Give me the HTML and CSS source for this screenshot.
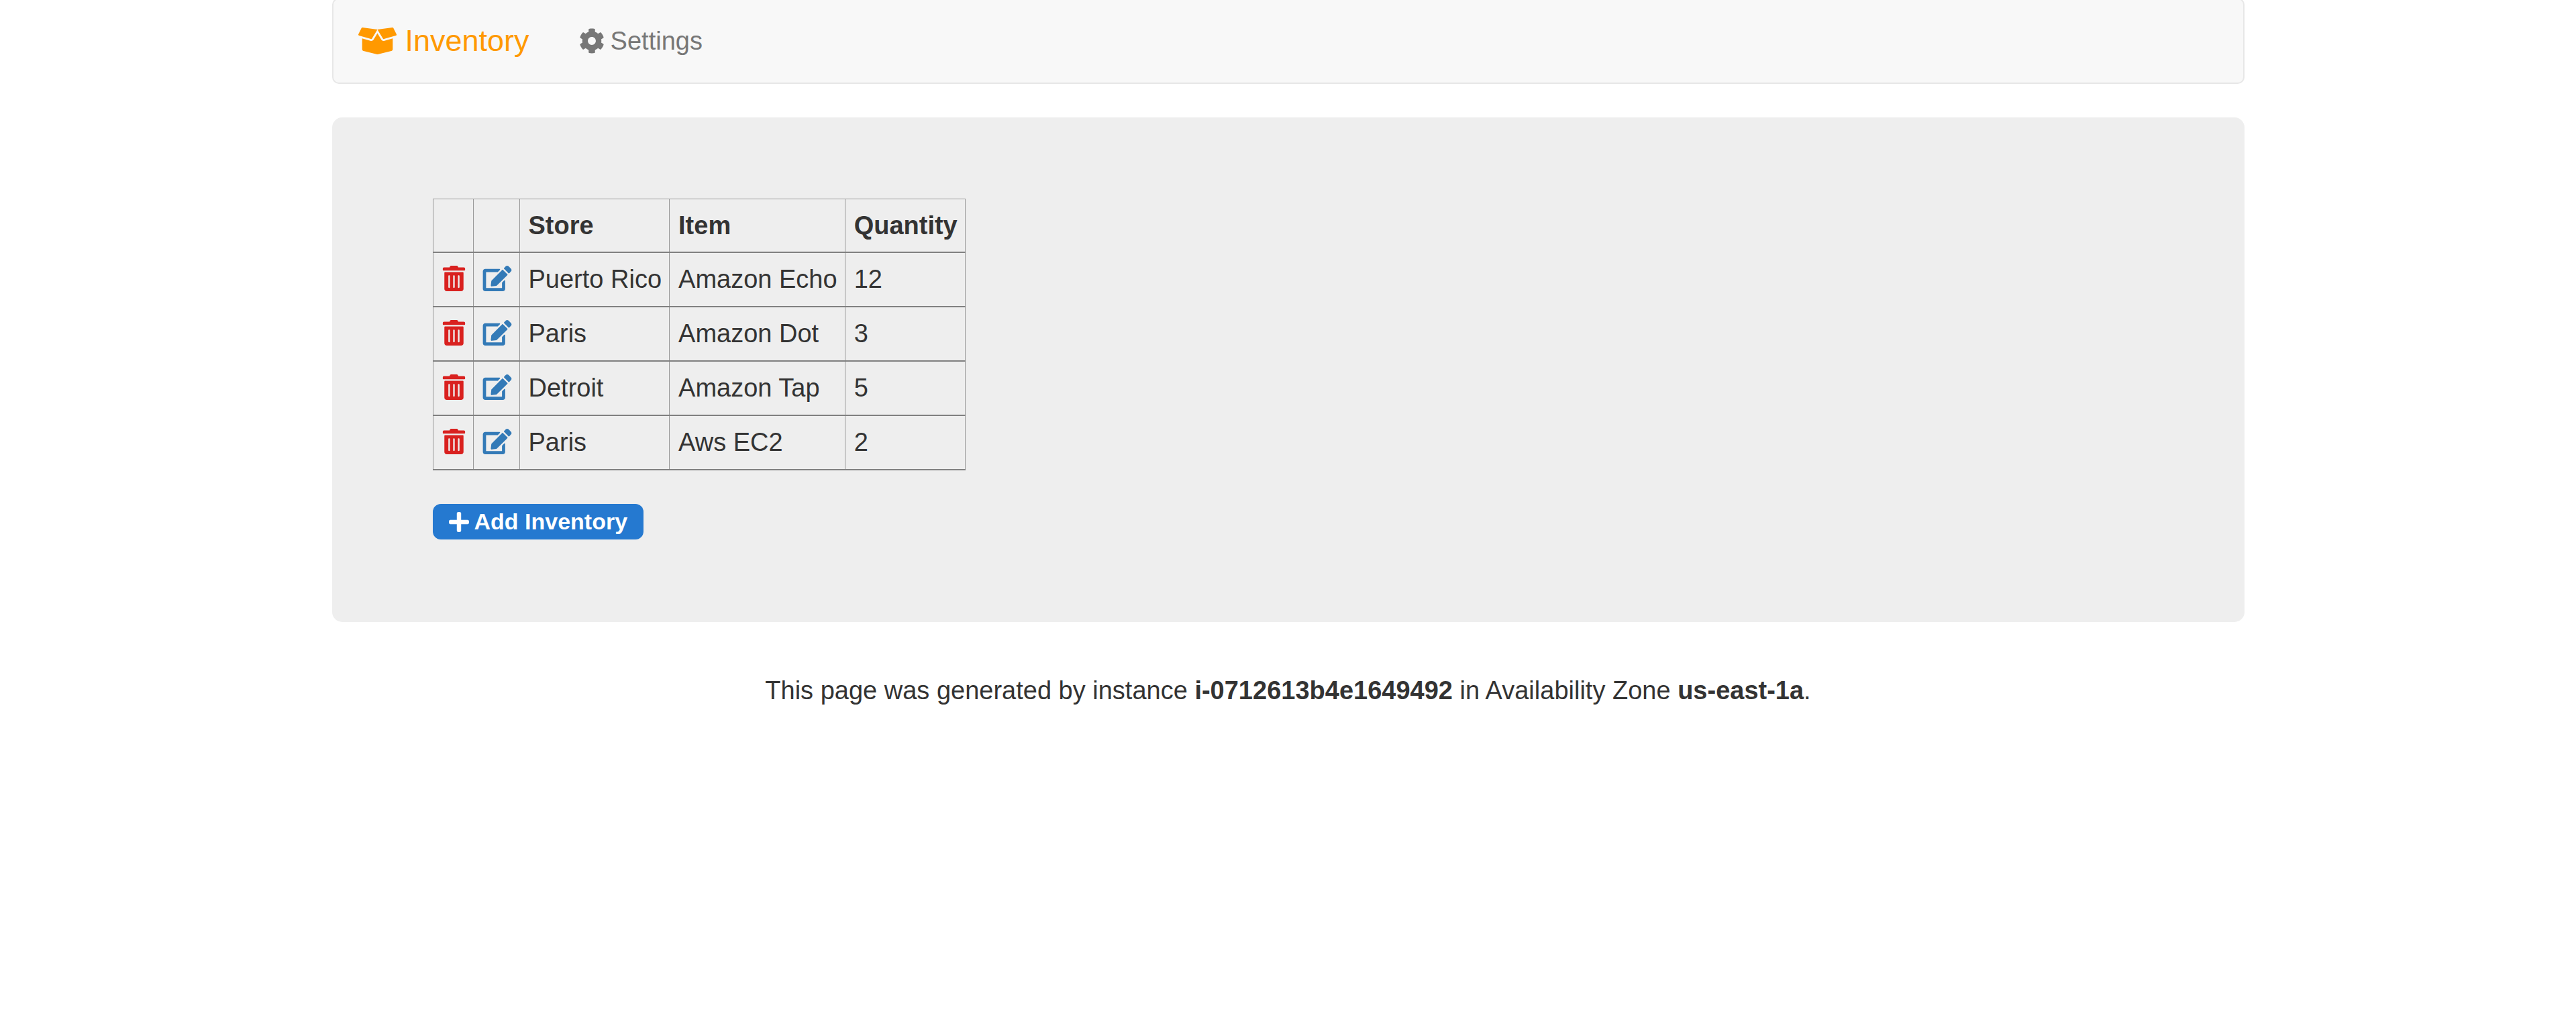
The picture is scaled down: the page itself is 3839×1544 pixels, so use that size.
FILE: index.html
```html
<!DOCTYPE html>
<html lang="en">
<head>
<meta charset="utf-8">
<meta name="viewport" content="width=device-width, initial-scale=1">
<title>Inventory</title>
<link rel="stylesheet" href="styles.css">
</head>
<body>
<svg class="sprite" aria-hidden="true">
  <symbol id="box-open" viewBox="0 0 640 512"><path d="M53.2 41L1.7 143.8c-4.6 9.2.3 20.2 10.1 23l197.9 56.5c7.1 2 14.7-1 18.5-7.3L320 64 69.8 32.1c-6.9-.8-13.5 2.7-16.6 8.9zm585.1 102.8L586.8 41c-3.1-6.2-9.8-9.8-16.7-8.9L320 64l91.7 152.1c3.8 6.3 11.4 9.3 18.5 7.3l197.9-56.5c9.9-2.9 14.7-13.9 10.2-23.1zM425.7 256c-16.9 0-32.8-9-41.4-23.4L320 126l-64.2 106.6c-8.7 14.5-24.6 23.5-41.5 23.5-4.5 0-9-.6-13.3-1.9L64 215v178c0 14.7 10 27.5 24.2 31l216.2 54.1c10.2 2.5 20.9 2.5 31 0L551.8 424c14.2-3.6 24.2-16.4 24.2-31V215l-137 39.1c-4.3 1.3-8.8 1.9-13.3 1.9z"/></symbol>
  <symbol id="cog" viewBox="0 0 512 512"><path d="M487.4 315.7l-42.6-24.6c4.3-23.2 4.3-47 0-70.2l42.6-24.6c4.9-2.8 7.1-8.6 5.5-14-11.1-35.6-30-67.8-54.7-94.6-3.8-4.1-10-5.1-14.8-2.3L380.8 110c-17.9-15.4-38.5-27.3-60.8-35.1V25.8c0-5.6-3.9-10.5-9.4-11.7-36.7-8.2-74.3-7.8-109.2 0-5.5 1.2-9.4 6.1-9.4 11.7V75c-22.2 7.9-42.8 19.8-60.8 35.1L88.7 85.5c-4.9-2.8-11-1.9-14.8 2.3-24.7 26.7-43.6 58.9-54.7 94.6-1.7 5.4.6 11.2 5.5 14L67.3 221c-4.3 23.2-4.3 47 0 70.2l-42.6 24.6c-4.9 2.8-7.1 8.6-5.5 14 11.1 35.6 30 67.8 54.7 94.6 3.8 4.1 10 5.1 14.8 2.3l42.6-24.6c17.9 15.4 38.5 27.3 60.8 35.1v49.2c0 5.6 3.9 10.5 9.4 11.7 36.7 8.2 74.3 7.8 109.2 0 5.5-1.2 9.4-6.1 9.4-11.7v-49.2c22.2-7.9 42.8-19.8 60.8-35.1l42.6 24.6c4.9 2.8 11 1.9 14.8-2.3 24.7-26.7 43.6-58.9 54.7-94.6 1.5-5.5-.7-11.3-5.6-14.1zM256 336c-44.1 0-80-35.9-80-80s35.9-80 80-80 80 35.9 80 80-35.9 80-80 80z"/></symbol>
  <symbol id="trash" viewBox="0 0 448 512"><path d="M0 84V56c0-13.3 10.7-24 24-24h112l9.4-18.7c4-8.2 12.3-13.3 21.4-13.3h114.3c9.1 0 17.4 5.1 21.5 13.3L312 32h112c13.3 0 24 10.7 24 24v28c0 6.6-5.4 12-12 12H12C5.4 96 0 90.6 0 84zm416 56v324c0 26.5-21.5 48-48 48H80c-26.5 0-48-21.5-48-48V140c0-6.6 5.4-12 12-12h360c6.6 0 12 5.4 12 12zm-272 68c0-8.8-7.2-16-16-16s-16 7.2-16 16v224c0 8.8 7.2 16 16 16s16-7.2 16-16V208zm96 0c0-8.8-7.2-16-16-16s-16 7.2-16 16v224c0 8.8 7.2 16 16 16s16-7.2 16-16V208zm96 0c0-8.8-7.2-16-16-16s-16 7.2-16 16v224c0 8.8 7.2 16 16 16s16-7.2 16-16V208z"/></symbol>
  <symbol id="edit" viewBox="0 0 576 512"><path d="M402.6 83.2l90.2 90.2c3.8 3.8 3.8 10 0 13.8L274.4 405.6l-92.8 10.3c-12.4 1.4-22.9-9.1-21.5-21.5l10.3-92.8L388.8 83.2c3.8-3.8 10-3.8 13.8 0zm162-22.9l-48.8-48.8c-15.2-15.2-39.9-15.2-55.2 0l-35.4 35.4c-3.8 3.8-3.8 10 0 13.8l90.2 90.2c3.8 3.8 10 3.8 13.8 0l35.4-35.4c15.2-15.3 15.2-40 0-55.2zM384 346.2V448H64V128h229.8c3.2 0 6.2-1.3 8.5-3.5l40-40c7.6-7.6 2.2-20.5-8.5-20.5H48C21.5 64 0 85.5 0 112v352c0 26.5 21.5 48 48 48h352c26.5 0 48-21.5 48-48V306.2c0-10.7-12.9-16-20.5-8.5l-40 40c-2.2 2.3-3.5 5.3-3.5 8.5z"/></symbol>
  <symbol id="plus" viewBox="0 32 448 448"><path d="M416 208H272V64c0-17.67-14.33-32-32-32h-32c-17.67 0-32 14.33-32 32v144H32c-17.67 0-32 14.33-32 32v32c0 17.67 14.33 32 32 32h144v144c0 17.67 14.33 32 32 32h32c17.67 0 32-14.33 32-32V304h144c17.67 0 32-14.33 32-32v-32c0-17.67-14.33-32-32-32z"/></symbol>
</svg>

<div class="container">
  <nav class="navbar">
    <a class="brand" href="#"><svg class="icon icon-brand"><use href="#box-open"/></svg>Inventory</a>
    <a class="nav-link" href="#"><svg class="icon icon-cog"><use href="#cog"/></svg>Settings</a>
  </nav>

  <main class="jumbotron">
    <table class="inventory">
      <thead>
        <tr><th></th><th></th><th scope="col">Store</th><th scope="col">Item</th><th scope="col">Quantity</th></tr>
      </thead>
      <tbody>
        <tr>
          <td><a class="delete" href="#" aria-label="Delete"><svg class="icon icon-trash"><use href="#trash"/></svg></a></td>
          <td><a class="edit" href="#" aria-label="Edit"><svg class="icon icon-edit"><use href="#edit"/></svg></a></td>
          <td>Puerto Rico</td><td>Amazon Echo</td><td>12</td>
        </tr>
        <tr>
          <td><a class="delete" href="#" aria-label="Delete"><svg class="icon icon-trash"><use href="#trash"/></svg></a></td>
          <td><a class="edit" href="#" aria-label="Edit"><svg class="icon icon-edit"><use href="#edit"/></svg></a></td>
          <td>Paris</td><td>Amazon Dot</td><td>3</td>
        </tr>
        <tr>
          <td><a class="delete" href="#" aria-label="Delete"><svg class="icon icon-trash"><use href="#trash"/></svg></a></td>
          <td><a class="edit" href="#" aria-label="Edit"><svg class="icon icon-edit"><use href="#edit"/></svg></a></td>
          <td>Detroit</td><td>Amazon Tap</td><td>5</td>
        </tr>
        <tr>
          <td><a class="delete" href="#" aria-label="Delete"><svg class="icon icon-trash"><use href="#trash"/></svg></a></td>
          <td><a class="edit" href="#" aria-label="Edit"><svg class="icon icon-edit"><use href="#edit"/></svg></a></td>
          <td>Paris</td><td>Aws EC2</td><td>2</td>
        </tr>
      </tbody>
    </table>
    <button class="add" type="button"><svg class="icon icon-plus"><use href="#plus"/></svg>Add Inventory</button>
  </main>

  <footer class="footer">This page was generated by instance <strong>i-0712613b4e1649492</strong> in Availability Zone <strong>us-east-1a</strong>.</footer>
</div>
</body>
</html>
```
FILE: styles.css
```css
* { box-sizing: border-box; }

body {
  margin: 0;
  background: #fff;
  color: #333;
  font-family: "Liberation Sans", Arial, Helvetica, sans-serif;
  font-size: 38px;
  line-height: 54px;
}

a { text-decoration: none; }

.sprite { position: absolute; width: 0; height: 0; }

.icon { flex: none; fill: currentColor; }
.icon-brand { width: 57px; height: 46px; }
.icon-cog { width: 38px; height: 38px; }
.icon-trash { width: 35px; height: 38px; vertical-align: -5px; }
.icon-edit { width: 44px; height: 38px; vertical-align: -5px; }
.icon-plus { width: 30px; height: 30px; }

.container {
  max-width: 2850px;
  margin: 0 auto;
}

/* The bar is tucked slightly under the top of the window */
.navbar {
  display: flex;
  align-items: center;
  gap: 74px;
  min-height: 128px;
  margin: -3px 0 50px;
  padding: 0 37px;
  background: #f8f8f8;
  border: 2px solid #e7e7e7;
  border-radius: 10px;
}

.brand,
.nav-link {
  display: flex;
  align-items: center;
}
.brand { gap: 13px; color: #f90; font-size: 45px; }
.nav-link { gap: 9px; color: #777; }

.jumbotron {
  padding: 121px 150px 123px;
  background: #eee;
  border-radius: 15px;
}

.inventory {
  margin-bottom: 50px;
  border-collapse: collapse;
}
.inventory th,
.inventory td {
  padding: 12px 11px 12px 13px;
  border: 1px solid #999;
  border-bottom: 2px solid #808080;
  text-align: left;
  white-space: nowrap;
}
.inventory td { padding-bottom: 13px; }

.delete { color: #d9211f; }
.edit { color: #337ab7; }

.add {
  display: flex;
  align-items: center;
  gap: 8px;
  padding: 0 24px;
  border: 0;
  border-radius: 12px;
  background: #2579d0;
  color: #fff;
  font: bold 34px/53px "Liberation Sans", Arial, Helvetica, sans-serif;
  cursor: pointer;
}

.footer {
  padding: 75px 0;
  text-align: center;
}
```
